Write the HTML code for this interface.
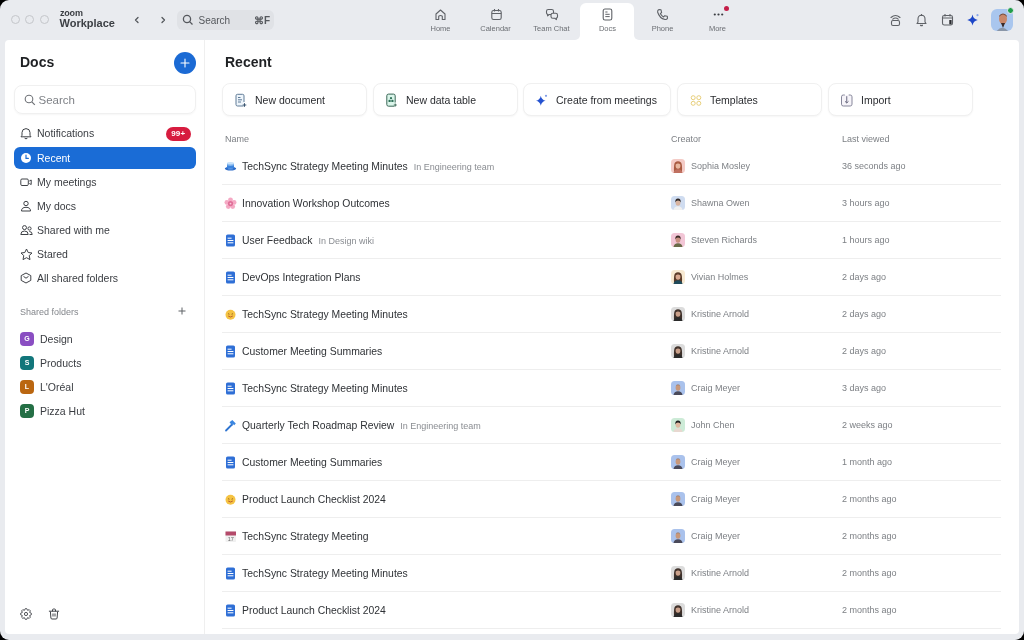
<!DOCTYPE html>
<html><head><meta charset="utf-8">
<style>
*{margin:0;padding:0;box-sizing:border-box}
html,body{width:1024px;height:640px;overflow:hidden;background:#000}
body{font-family:"Liberation Sans",sans-serif;position:relative}
#win{will-change:transform;position:absolute;left:0;top:0;width:1024px;height:640px;background:#e9ebef;border-radius:9px;overflow:hidden}
.abs{position:absolute}
.t{position:absolute;white-space:nowrap;line-height:1}
#panel{position:absolute;left:5px;top:40px;width:1014px;height:594px;background:#fff;border-radius:4px}
#divider{position:absolute;left:204px;top:40px;width:1px;height:594px;background:#efefef}
.light{position:absolute;width:9px;height:9px;border:1px solid #c4c6ca;border-radius:50%;top:15px}
.tab{position:absolute;top:3px;width:55px;height:37px}
.tab .lbl{position:absolute;left:0;right:0;top:21.5px;font-size:7.5px;color:#6b6e73;line-height:1;text-align:center}
.tab svg{position:absolute;left:21px;top:4.5px}
.nav{position:absolute;left:14px;width:182px;height:22px;border-radius:6px}
.nav .lbl{position:absolute;left:23px;top:6px;font-size:10.5px;color:#3a3d42;line-height:1;white-space:nowrap}
.nav svg{position:absolute;left:6px;top:5px}
.fold{position:absolute;left:20px;width:14px;height:14px;border-radius:4px;color:#fff;font-size:7px;font-weight:bold;text-align:center;line-height:14px}
.foldl{position:absolute;left:40px;font-size:10.5px;color:#3a3d42;line-height:1;white-space:nowrap}
.btn{position:absolute;top:83px;height:33px;border:1px solid #f0f0f0;border-radius:8px;background:#fff;box-shadow:0 1px 2px rgba(0,0,0,0.04)}
.btn .lbl{position:absolute;left:32px;top:10.5px;font-size:10.5px;color:#2b2d31;line-height:1;white-space:nowrap}
.btn svg{position:absolute;left:11px;top:9px}
.row{position:absolute;left:222px;width:779px;height:37px;border-bottom:1px solid #eeeeee}
.row .nm{position:absolute;left:20px;top:14px;font-size:10.4px;color:#2f3236;line-height:1;white-space:nowrap}
.row .loc{font-size:9px;color:#8a8d92;margin-left:6px}
.row .ic{position:absolute;left:2px;top:12px;width:13px;height:13px}
.row .ic svg{display:block}
.row .av{position:absolute;left:449px;top:11px;width:14px;height:14px}
.row .av svg{display:block}
.row .cr{position:absolute;left:469px;top:14px;font-size:9px;color:#7d8085;line-height:1;white-space:nowrap}
.row .lv{position:absolute;left:620px;top:14px;font-size:9px;color:#7d8085;line-height:1;white-space:nowrap}
.hdr{position:absolute;top:135px;font-size:9px;color:#7d8085;line-height:1}
</style></head><body>
<div id="win">
  <!-- title bar -->
  <div class="light" style="left:11px"></div>
  <div class="light" style="left:25px"></div>
  <div class="light" style="left:40px"></div>
  <div class="t" style="left:60px;top:9px;font-size:9px;font-weight:bold;color:#3a3d42;letter-spacing:-0.2px">zoom</div>
  <div class="t" style="left:59.5px;top:17.7px;font-size:11px;font-weight:bold;color:#3d4045">Workplace</div>
  <svg class="abs" style="left:133px;top:16px" width="8" height="8" viewBox="0 0 8 8"><path d="M5 1.5 L2.5 4 L5 6.5" fill="none" stroke="#55585d" stroke-width="1.3" stroke-linecap="round" stroke-linejoin="round"/></svg>
  <svg class="abs" style="left:159px;top:16px" width="8" height="8" viewBox="0 0 8 8"><path d="M3 1.5 L5.5 4 L3 6.5" fill="none" stroke="#55585d" stroke-width="1.3" stroke-linecap="round" stroke-linejoin="round"/></svg>
  <div class="abs" style="left:177px;top:10px;width:97px;height:20px;border-radius:6px;background:#e0e2e6"></div>
  <svg class="abs" style="left:182px;top:14px" width="12" height="12" viewBox="0 0 12 12"><circle cx="5" cy="5" r="3.6" fill="none" stroke="#55585d" stroke-width="1.3"/><path d="M7.6 7.6 L10.5 10.5" stroke="#55585d" stroke-width="1.3"/></svg>
  <div class="t" style="left:198.5px;top:15.5px;font-size:10px;color:#55585d">Search</div>
  <div class="t" style="left:254px;top:16px;font-size:10px;font-weight:bold;color:#55585d">&#8984;F</div>

  <!-- tabs -->
  <div class="tab" style="left:413px"><svg width="13" height="13" viewBox="0 0 13 13"><path d="M2 6 L6.5 2 L11 6 V11.5 H8.3 V8.2 Q6.5 6.8 4.7 8.2 V11.5 H2Z" fill="none" stroke="#5f6267" stroke-width="1.1" stroke-linejoin="round"/></svg><div class="lbl">Home</div></div>
  <div class="tab" style="left:468px"><svg width="13" height="13" viewBox="0 0 13 13" style="left:22px"><rect x="1.8" y="2.5" width="9.4" height="9" rx="1.8" fill="none" stroke="#5f6267" stroke-width="1.1"/><path d="M1.8 5.5H11.2M4.5 1V3.5M8.5 1V3.5" stroke="#5f6267" stroke-width="1.1"/></svg><div class="lbl">Calendar</div></div>
  <div class="tab" style="left:524px"><svg width="14" height="14" viewBox="0 0 14 14"><path d="M3.3 1.5 H6.7 Q8.5 1.5 8.5 3.3 V4.7 Q8.5 6.5 6.7 6.5 H4.2 L2.6 7.8 V6.3 Q1.5 6 1.5 4.7 V3.3 Q1.5 1.5 3.3 1.5Z" fill="none" stroke="#5f6267" stroke-width="1.1" stroke-linejoin="round"/><path d="M7.8 5.3 H10.7 Q12.5 5.3 12.5 7.1 V8.5 Q12.5 9.8 11.4 10.1 V11.6 L9.8 10.3 H7.8 Q6 10.3 6 8.5 V7.1 Q6 5.3 7.8 5.3Z" fill="#e9ebef" stroke="#5f6267" stroke-width="1.1" stroke-linejoin="round"/></svg><div class="lbl">Team Chat</div></div>
  <div class="abs" style="left:580px;top:3px;width:54px;height:38px;background:#fff;border-radius:6px 6px 0 0"></div>
  <div class="abs" style="left:575px;top:35px;width:5px;height:5px;background:#fff"></div>
  <div class="abs" style="left:575px;top:35px;width:5px;height:5px;background:#e9ebef;border-bottom-right-radius:5px"></div>
  <div class="abs" style="left:634px;top:35px;width:5px;height:5px;background:#fff"></div>
  <div class="abs" style="left:634px;top:35px;width:5px;height:5px;background:#e9ebef;border-bottom-left-radius:5px"></div>
  <div class="tab" style="left:580px"><svg width="13" height="13" viewBox="0 0 13 13"><rect x="2.2" y="1" width="8.6" height="11" rx="1.8" fill="none" stroke="#5f6267" stroke-width="1.1"/><path d="M4.3 4H6.5M4.3 6.3H8.7M4.3 8.6H8.7" stroke="#5f6267" stroke-width="1"/></svg><div class="lbl">Docs</div></div>
  <div class="tab" style="left:635px"><svg width="13" height="13" viewBox="0 0 13 13"><path d="M3 1.5 L5 1.8 L5.6 4.5 L4.3 5.6 Q5.6 8 7.6 9 L8.7 7.7 L11.3 8.3 L11.5 10.3 Q10.8 11.8 9 11.5 Q3.5 10.3 1.6 4 Q1.5 2 3 1.5Z" fill="none" stroke="#5f6267" stroke-width="1.1" stroke-linejoin="round"/></svg><div class="lbl">Phone</div></div>
  <div class="tab" style="left:690px"><svg width="13" height="13" viewBox="0 0 13 13" style="left:22px"><circle cx="2.8" cy="6.5" r="1.1" fill="#3a3d42"/><circle cx="6.5" cy="6.5" r="1.1" fill="#3a3d42"/><circle cx="10.2" cy="6.5" r="1.1" fill="#3a3d42"/></svg><div class="lbl">More</div></div>
  <div class="abs" style="left:724px;top:6px;width:5px;height:5px;border-radius:50%;background:#c41e48"></div>

  <!-- right icons -->
  <svg class="abs" style="left:889px;top:13px" width="13" height="14" viewBox="0 0 13 14"><path d="M2 4.5 Q6.5 0.5 11 4.5M3.8 6.2 Q6.5 3.8 9.2 6.2" fill="none" stroke="#5f6267" stroke-width="1.1" stroke-linecap="round"/><rect x="2.5" y="7.5" width="8" height="5" rx="1.5" fill="none" stroke="#5f6267" stroke-width="1.1"/></svg>
  <svg class="abs" style="left:915px;top:13px" width="13" height="14" viewBox="0 0 13 14"><path d="M2 10.5 H11 L10 9 V6 Q10 2.5 6.5 2.3 Q3 2.5 3 6 V9Z" fill="none" stroke="#5f6267" stroke-width="1.1" stroke-linejoin="round"/><path d="M5.2 12 Q6.5 13.3 7.8 12" fill="none" stroke="#5f6267" stroke-width="1.1"/><path d="M6.5 1 V2.3" stroke="#5f6267" stroke-width="1.1"/></svg>
  <svg class="abs" style="left:941px;top:13px" width="13" height="14" viewBox="0 0 13 14"><rect x="1.5" y="2.5" width="10" height="9.5" rx="1.8" fill="none" stroke="#5f6267" stroke-width="1.1"/><path d="M1.5 5H11.5M4 1V3.5M9 1V3.5" stroke="#5f6267" stroke-width="1.1"/><rect x="8.3" y="7" width="2.3" height="4.3" fill="#2a2c30"/></svg>
  <svg class="abs" style="left:966px;top:12px" width="15" height="15" viewBox="0 0 15 15"><path d="M6.5 2.5 Q7.3 7.2 11.8 8 Q7.3 8.8 6.5 13.5 Q5.7 8.8 1.2 8 Q5.7 7.2 6.5 2.5Z" fill="#1d47c8"/><circle cx="11.5" cy="3.2" r="1.1" fill="#8aa6e8"/></svg>
  <div class="abs" style="left:990.5px;top:8.5px;width:22px;height:22.5px;border-radius:6px;background:#a9c6ee;overflow:hidden">
    <svg width="23" height="23" viewBox="0 0 23 23"><ellipse cx="12" cy="10" rx="4" ry="5.2" fill="#c8876a"/><path d="M8 8 Q12 3 16 8 Q16 5 12 4.5 Q8 5 8 8Z" fill="#7a5040"/><path d="M5 23 Q11 14.5 18 23Z" fill="#8a96a8"/><path d="M10 14 L12 19 L14 14Z" fill="#3a2a28"/></svg>
  </div>
  <div class="abs" style="left:1007px;top:6.5px;width:7px;height:7px;border-radius:50%;background:#1f9d4a;border:1px solid #e9ebef"></div>

  <div id="panel"></div>
  <div id="divider"></div>

  <!-- sidebar -->
  <div class="t" style="left:20px;top:55px;font-size:14px;font-weight:bold;color:#1f2124">Docs</div>
  <div class="abs" style="left:174px;top:51.5px;width:22px;height:22px;border-radius:50%;background:#1b6ad4"></div>
  <svg class="abs" style="left:178px;top:55.5px" width="14" height="14" viewBox="0 0 14 14"><path d="M7 3V11M3 7H11" stroke="#fff" stroke-width="1.1" stroke-linecap="round"/></svg>

  <div class="abs" style="left:14px;top:85px;width:182px;height:29px;border:1px solid #f0f0f0;border-radius:8px;box-shadow:0 1px 2px rgba(0,0,0,0.04)"></div>
  <svg class="abs" style="left:23.5px;top:93.5px" width="12" height="12" viewBox="0 0 12 12"><circle cx="5" cy="5" r="3.8" fill="none" stroke="#6f7277" stroke-width="1.1"/><path d="M7.8 7.8 L10.8 10.8" stroke="#6f7277" stroke-width="1.2"/></svg>
  <div class="t" style="left:38.5px;top:95px;font-size:11.5px;color:#7f8287">Search</div>

  <div class="nav" style="top:122px"><svg width="12" height="13" viewBox="0 0 12 13"><path d="M1 9.8 H11 L10 8.3 V5.5 Q10 1.8 6 1.6 Q2 1.8 2 5.5 V8.3Z" fill="none" stroke="#3f4247" stroke-width="1" stroke-linejoin="round"/><path d="M4.6 11.2 Q6 12.5 7.4 11.2" fill="none" stroke="#3f4247" stroke-width="1"/></svg><div class="lbl">Notifications</div></div>
  <div class="abs" style="left:166px;top:126.5px;width:24.5px;height:14px;border-radius:7px;background:#d71c3f;color:#fff;font-size:8px;font-weight:bold;text-align:center;line-height:14px;letter-spacing:0.2px">99+</div>

  <div class="nav" style="top:147px;background:#1a6cd6"><svg width="12" height="12" viewBox="0 0 12 12"><circle cx="6" cy="6" r="5" fill="#fff"/><path d="M6 3.2V6.3H8.4" fill="none" stroke="#1a6cd6" stroke-width="1.2" stroke-linecap="round"/></svg><div class="lbl" style="color:#fff">Recent</div></div>
  <div class="nav" style="top:171px"><svg width="12" height="12" viewBox="0 0 12 12"><rect x="0.8" y="3" width="7.5" height="6.5" rx="1.2" fill="none" stroke="#3f4247" stroke-width="1"/><path d="M9.3 5 L11.2 4 V8.5 L9.3 7.5" fill="none" stroke="#3f4247" stroke-width="1"/></svg><div class="lbl">My meetings</div></div>
  <div class="nav" style="top:195px"><svg width="12" height="12" viewBox="0 0 12 12"><circle cx="6" cy="3.5" r="2.2" fill="none" stroke="#3f4247" stroke-width="1"/><path d="M1.5 11 Q1.5 7.3 6 7.3 Q10.5 7.3 10.5 11Z" fill="none" stroke="#3f4247" stroke-width="1" stroke-linejoin="round"/></svg><div class="lbl">My docs</div></div>
  <div class="nav" style="top:219px"><svg width="13" height="12" viewBox="0 0 13 12"><circle cx="4.5" cy="3.6" r="2" fill="none" stroke="#3f4247" stroke-width="1"/><path d="M0.8 10.5 Q0.8 7 4.5 7 Q8.2 7 8.2 10.5Z" fill="none" stroke="#3f4247" stroke-width="1"/><circle cx="9.5" cy="4.5" r="1.6" fill="none" stroke="#3f4247" stroke-width="1"/><path d="M9.3 7.5 Q12.2 7.5 12.2 10.5 H9.5" fill="none" stroke="#3f4247" stroke-width="1"/></svg><div class="lbl">Shared with me</div></div>
  <div class="nav" style="top:243px"><svg width="13" height="13" viewBox="0 0 13 13" style="left:5.5px;top:5px"><path d="M6.5 1 L8.2 4.5 L12 5 L9.2 7.6 L10 11.6 L6.5 9.7 L3 11.6 L3.8 7.6 L1 5 L4.8 4.5Z" fill="none" stroke="#3f4247" stroke-width="1" stroke-linejoin="round"/></svg><div class="lbl">Stared</div></div>
  <div class="nav" style="top:267px"><svg width="12" height="12" viewBox="0 0 12 12"><path d="M6 1 L10.8 3.6 V8.4 L6 11 L1.2 8.4 V3.6Z" fill="none" stroke="#3f4247" stroke-width="1" stroke-linejoin="round"/><path d="M3.8 4.6 L6 6.2 L8.2 4.6" fill="none" stroke="#3f4247" stroke-width="1" stroke-linecap="round" stroke-linejoin="round"/></svg><div class="lbl">All shared folders</div></div>

  <div class="t" style="left:20px;top:307.5px;font-size:9px;color:#83868b">Shared folders</div>
  <svg class="abs" style="left:177px;top:306px" width="10" height="10" viewBox="0 0 10 10"><path d="M5 1.5V8.5M1.5 5H8.5" stroke="#5f6267" stroke-width="1"/></svg>

  <div class="fold" style="top:331.7px;background:#8a4ec2">G</div><div class="foldl" style="top:334px">Design</div>
  <div class="fold" style="top:355.7px;background:#12767b">S</div><div class="foldl" style="top:358px">Products</div>
  <div class="fold" style="top:379.7px;background:#ba6610">L</div><div class="foldl" style="top:382px">L'Oréal</div>
  <div class="fold" style="top:403.7px;background:#246f45">P</div><div class="foldl" style="top:406px">Pizza Hut</div>

  <svg class="abs" style="left:19.5px;top:608px" width="12" height="12" viewBox="0 0 12 12"><path d="M4.47 2.30 L5.25 0.65 L6.75 0.65 L7.53 2.30 L9.25 1.69 L10.31 2.75 L9.70 4.47 L11.35 5.25 L11.35 6.75 L9.70 7.53 L10.31 9.25 L9.25 10.31 L7.53 9.70 L6.75 11.35 L5.25 11.35 L4.47 9.70 L2.75 10.31 L1.69 9.25 L2.30 7.53 L0.65 6.75 L0.65 5.25 L2.30 4.47 L1.69 2.75 L2.75 1.69Z" fill="none" stroke="#3f4247" stroke-width="0.9" stroke-linejoin="round"/><circle cx="6" cy="6" r="1.6" fill="none" stroke="#3f4247" stroke-width="0.9"/></svg>
  <svg class="abs" style="left:48px;top:608px" width="12" height="12" viewBox="0 0 12 12"><path d="M1.3 3.2 H10.7M4.5 3 V2 Q4.5 1 5.5 1 H6.5 Q7.5 1 7.5 2 V3" fill="none" stroke="#3f4247" stroke-width="1" stroke-linecap="round"/><path d="M2.4 3.6 L2.9 10 Q3 11 4 11 H8 Q9 11 9.1 10 L9.6 3.6" fill="none" stroke="#3f4247" stroke-width="1" stroke-linejoin="round"/><path d="M4.8 5.5V8.5M6 5.5V8.5M7.2 5.5V8.5" stroke="#3f4247" stroke-width="0.7"/></svg>

  <!-- main -->
  <div class="t" style="left:225px;top:55px;font-size:14px;font-weight:bold;color:#1f2124">Recent</div>

  <div class="btn" style="left:222px;width:145px"><svg width="14" height="15" viewBox="0 0 14 15"><path d="M9.5 13 H3.5 Q2 13 2 11.5 V2.8 Q2 1.3 3.5 1.3 H8.5 Q10 1.3 10 2.8 V9" fill="#eef5fb" stroke="#5e7a96" stroke-width="1"/><path d="M4 4.5H6.5M4 6.8H8M4 9H7" stroke="#5e7a96" stroke-width="1"/><path d="M10.5 10.2V13.8M8.7 12H12.3" stroke="#3a5570" stroke-width="1"/></svg><div class="lbl">New document</div></div>
  <div class="btn" style="left:373px;width:145px"><svg width="14" height="15" viewBox="0 0 14 15"><path d="M9.5 13.2 H3.5 Q1.8 13.2 1.8 11.5 V2.8 Q1.8 1.1 3.5 1.1 H8.5 Q10.2 1.1 10.2 2.8 V9.5" fill="#daf5ea" stroke="#3a6656" stroke-width="1"/><circle cx="6" cy="5.2" r="1.1" fill="#2f7058"/><circle cx="4.6" cy="7.9" r="1.2" fill="#2f7058"/><circle cx="7.4" cy="7.9" r="1.2" fill="#2f7058"/><path d="M10.3 10.5V13.5M8.8 12H11.8" stroke="#3a6656" stroke-width="0.9"/></svg><div class="lbl">New data table</div></div>
  <div class="btn" style="left:523px;width:148px"><svg width="14" height="15" viewBox="0 0 14 15"><path d="M5.8 2.8 Q6.6 7 10.6 7.8 Q6.6 8.6 5.8 12.8 Q5 8.6 1 7.8 Q5 7 5.8 2.8Z" fill="#2452d0"/><circle cx="11" cy="2.8" r="1.1" fill="#7f9be6"/></svg><div class="lbl">Create from meetings</div></div>
  <div class="btn" style="left:677px;width:145px"><svg width="14" height="15" viewBox="0 0 14 15"><circle cx="4.2" cy="4.7" r="2" fill="none" stroke="#e8cf7a" stroke-width="1"/><circle cx="9.8" cy="4.7" r="2" fill="none" stroke="#e8cf7a" stroke-width="1"/><circle cx="4.2" cy="10.3" r="2" fill="none" stroke="#e8cf7a" stroke-width="1"/><circle cx="9.8" cy="10.3" r="2" fill="none" stroke="#e8cf7a" stroke-width="1"/></svg><div class="lbl">Templates</div></div>
  <div class="btn" style="left:828px;width:145px"><svg width="14" height="15" viewBox="0 0 14 15"><rect x="1.5" y="2" width="10.5" height="11" rx="1.8" fill="#f6f4f9"/><path d="M4.8 2 H3.3 Q1.5 2 1.5 3.8 V11.2 Q1.5 13 3.3 13 H10.2 Q12 13 12 11.2 V3.8 Q12 2 10.2 2 H8.7" fill="none" stroke="#86869a" stroke-width="1"/><path d="M6.75 3.2V10M5 8.3 L6.75 10 L8.5 8.3" fill="none" stroke="#6a6a80" stroke-width="1"/></svg><div class="lbl">Import</div></div>

  <div class="hdr" style="left:225px">Name</div>
  <div class="hdr" style="left:671px">Creator</div>
  <div class="hdr" style="left:842px">Last viewed</div>

<div class="row" style="top:148px"><div class="ic"><svg width="13" height="13" viewBox="0 0 13 13"><ellipse cx="6.5" cy="8.6" rx="5.7" ry="2" fill="#2e6cc8"/><path d="M3 3.2 V7.8 Q6.5 9.6 10 7.8 V3.2Z" fill="#3c84de"/><path d="M3 3.2 V5.2 Q6.5 6.6 10 5.2 V3.2Z" fill="#7fb4ee"/><ellipse cx="6.5" cy="3.2" rx="3.5" ry="1.2" fill="#c8e2fa"/><ellipse cx="6.5" cy="8.9" rx="3" ry="0.8" fill="#6aa6ee" opacity="0.6"/></svg></div><div class="nm">TechSync Strategy Meeting Minutes<span class="loc">In Engineering team</span></div><div class="av"><svg width="14" height="14" viewBox="0 0 14 14"><rect width="14" height="14" rx="3.5" fill="#f4cbc6"/><path d="M3 12.5 Q2.6 5.5 4 3.6 Q7 1 10 3.6 Q11.4 5.5 11 12.5Z" fill="#a85a40"/><path d="M2.5 14 Q3 10.5 7 10.3 Q11 10.5 11.5 14Z" fill="#c07060"/><ellipse cx="7" cy="6.8" rx="2.4" ry="3" fill="#e8b8a0"/><path d="M4.5 5.5 Q5 3.3 7 3.3 Q9 3.3 9.5 5.5 Q8 4.5 7 4.6 Q6 4.5 4.5 5.5Z" fill="#a85a40"/></svg></div><div class="cr">Sophia Mosley</div><div class="lv">36 seconds ago</div></div>
<div class="row" style="top:185px"><div class="ic"><svg width="13" height="13" viewBox="0 0 13 13"><g fill="#f5a9c4"><circle cx="6.5" cy="2.8" r="2.4"/><circle cx="10.1" cy="5.4" r="2.4"/><circle cx="8.7" cy="9.6" r="2.4"/><circle cx="4.3" cy="9.6" r="2.4"/><circle cx="2.9" cy="5.4" r="2.4"/></g><circle cx="6.5" cy="6.6" r="2.6" fill="#e06f98"/><circle cx="6.5" cy="6.6" r="0.9" fill="#f8c8da"/></svg></div><div class="nm">Innovation Workshop Outcomes</div><div class="av"><svg width="14" height="14" viewBox="0 0 14 14"><rect width="14" height="14" rx="3.5" fill="#cfdcf0"/><path d="M2.5 14 Q3 10.5 7 10.3 Q11 10.5 11.5 14Z" fill="#f0f0f0"/><ellipse cx="7" cy="6.8" rx="2.4" ry="3" fill="#d8b4a0"/><path d="M4.3 6.5 Q4 2.6 7 2.5 Q10 2.6 9.7 6.5 Q9 4.3 7 4.4 Q5 4.3 4.3 6.5Z" fill="#2e2624"/></svg></div><div class="cr">Shawna Owen</div><div class="lv">3 hours ago</div></div>
<div class="row" style="top:222px"><div class="ic"><svg width="13" height="13" viewBox="0 0 13 13"><rect x="2" y="0.5" width="9" height="12" rx="1.6" fill="#2f6fd6"/><path d="M4 4.2h3.2M4 6.5h5M4 8.8h5" stroke="#fff" stroke-width="1" stroke-linecap="round"/></svg></div><div class="nm">User Feedback<span class="loc">In Design wiki</span></div><div class="av"><svg width="14" height="14" viewBox="0 0 14 14"><rect width="14" height="14" rx="3.5" fill="#f2c6d6"/><path d="M2.5 14 Q3 10.5 7 10.3 Q11 10.5 11.5 14Z" fill="#6a6a48"/><ellipse cx="7" cy="6.8" rx="2.4" ry="3" fill="#c89080"/><path d="M4.3 6.5 Q4 2.6 7 2.5 Q10 2.6 9.7 6.5 Q9 4.3 7 4.4 Q5 4.3 4.3 6.5Z" fill="#3a2a24"/></svg></div><div class="cr">Steven Richards</div><div class="lv">1 hours ago</div></div>
<div class="row" style="top:259px"><div class="ic"><svg width="13" height="13" viewBox="0 0 13 13"><rect x="2" y="0.5" width="9" height="12" rx="1.6" fill="#2f6fd6"/><path d="M4 4.2h3.2M4 6.5h5M4 8.8h5" stroke="#fff" stroke-width="1" stroke-linecap="round"/></svg></div><div class="nm">DevOps Integration Plans</div><div class="av"><svg width="14" height="14" viewBox="0 0 14 14"><rect width="14" height="14" rx="3.5" fill="#f7e9d2"/><path d="M3 12.5 Q2.6 5.5 4 3.6 Q7 1 10 3.6 Q11.4 5.5 11 12.5Z" fill="#5a3a28"/><path d="M2.5 14 Q3 10.5 7 10.3 Q11 10.5 11.5 14Z" fill="#1f4a5a"/><ellipse cx="7" cy="6.8" rx="2.4" ry="3" fill="#d8a890"/><path d="M4.5 5.5 Q5 3.3 7 3.3 Q9 3.3 9.5 5.5 Q8 4.5 7 4.6 Q6 4.5 4.5 5.5Z" fill="#5a3a28"/></svg></div><div class="cr">Vivian Holmes</div><div class="lv">2 days ago</div></div>
<div class="row" style="top:296px"><div class="ic"><svg width="13" height="13" viewBox="0 0 13 13"><circle cx="6.5" cy="6.8" r="5" fill="#f5c343"/><path d="M4 6.2q0.7-0.8 1.4 0M7.6 6.2q0.7-0.8 1.4 0" stroke="#7a4a10" stroke-width="0.8" fill="none"/><path d="M4.2 8q2.3 2 4.6 0" stroke="#b5542a" stroke-width="0.9" fill="none"/></svg></div><div class="nm">TechSync Strategy Meeting Minutes</div><div class="av"><svg width="14" height="14" viewBox="0 0 14 14"><rect width="14" height="14" rx="3.5" fill="#dcdcdc"/><path d="M3 12.5 Q2.6 5.5 4 3.6 Q7 1 10 3.6 Q11.4 5.5 11 12.5Z" fill="#3e302a"/><path d="M2.5 14 Q3 10.5 7 10.3 Q11 10.5 11.5 14Z" fill="#2a2a2a"/><ellipse cx="7" cy="6.8" rx="2.4" ry="3" fill="#caa08a"/><path d="M4.5 5.5 Q5 3.3 7 3.3 Q9 3.3 9.5 5.5 Q8 4.5 7 4.6 Q6 4.5 4.5 5.5Z" fill="#3e302a"/></svg></div><div class="cr">Kristine Arnold</div><div class="lv">2 days ago</div></div>
<div class="row" style="top:333px"><div class="ic"><svg width="13" height="13" viewBox="0 0 13 13"><rect x="2" y="0.5" width="9" height="12" rx="1.6" fill="#2f6fd6"/><path d="M4 4.2h3.2M4 6.5h5M4 8.8h5" stroke="#fff" stroke-width="1" stroke-linecap="round"/></svg></div><div class="nm">Customer Meeting Summaries</div><div class="av"><svg width="14" height="14" viewBox="0 0 14 14"><rect width="14" height="14" rx="3.5" fill="#dcdcdc"/><path d="M3 12.5 Q2.6 5.5 4 3.6 Q7 1 10 3.6 Q11.4 5.5 11 12.5Z" fill="#3e302a"/><path d="M2.5 14 Q3 10.5 7 10.3 Q11 10.5 11.5 14Z" fill="#2a2a2a"/><ellipse cx="7" cy="6.8" rx="2.4" ry="3" fill="#caa08a"/><path d="M4.5 5.5 Q5 3.3 7 3.3 Q9 3.3 9.5 5.5 Q8 4.5 7 4.6 Q6 4.5 4.5 5.5Z" fill="#3e302a"/></svg></div><div class="cr">Kristine Arnold</div><div class="lv">2 days ago</div></div>
<div class="row" style="top:370px"><div class="ic"><svg width="13" height="13" viewBox="0 0 13 13"><rect x="2" y="0.5" width="9" height="12" rx="1.6" fill="#2f6fd6"/><path d="M4 4.2h3.2M4 6.5h5M4 8.8h5" stroke="#fff" stroke-width="1" stroke-linecap="round"/></svg></div><div class="nm">TechSync Strategy Meeting Minutes</div><div class="av"><svg width="14" height="14" viewBox="0 0 14 14"><rect width="14" height="14" rx="3.5" fill="#aac2ec"/><path d="M2.5 14 Q3 10.5 7 10.3 Q11 10.5 11.5 14Z" fill="#4a4a5a"/><ellipse cx="7" cy="6.8" rx="2.4" ry="3" fill="#c8987a"/><path d="M4.7 5.2 Q5 3.2 7 3.2 Q9 3.2 9.3 5.2 Q8 4.2 7 4.3 Q6 4.2 4.7 5.2Z" fill="#8a6a58" opacity="0.6"/></svg></div><div class="cr">Craig Meyer</div><div class="lv">3 days ago</div></div>
<div class="row" style="top:407px"><div class="ic"><svg width="13" height="13" viewBox="0 0 13 13"><path d="M2 11.5 L8 5.5" stroke="#2f74d0" stroke-width="1.8" stroke-linecap="round"/><path d="M5.5 3.2 L8.3 1 L11.8 4.6 L10.2 6.2 L8.6 4.8 L7.5 5.8Z" fill="#3b86e0"/></svg></div><div class="nm">Quarterly Tech Roadmap Review<span class="loc">In Engineering team</span></div><div class="av"><svg width="14" height="14" viewBox="0 0 14 14"><rect width="14" height="14" rx="3.5" fill="#cdebd7"/><path d="M2.5 14 Q3 10.5 7 10.3 Q11 10.5 11.5 14Z" fill="#e8d8d0"/><ellipse cx="7" cy="6.8" rx="2.4" ry="3" fill="#e0b8a0"/><path d="M4.3 6.5 Q4 2.6 7 2.5 Q10 2.6 9.7 6.5 Q9 4.3 7 4.4 Q5 4.3 4.3 6.5Z" fill="#1e1e1e"/></svg></div><div class="cr">John Chen</div><div class="lv">2 weeks ago</div></div>
<div class="row" style="top:444px"><div class="ic"><svg width="13" height="13" viewBox="0 0 13 13"><rect x="2" y="0.5" width="9" height="12" rx="1.6" fill="#2f6fd6"/><path d="M4 4.2h3.2M4 6.5h5M4 8.8h5" stroke="#fff" stroke-width="1" stroke-linecap="round"/></svg></div><div class="nm">Customer Meeting Summaries</div><div class="av"><svg width="14" height="14" viewBox="0 0 14 14"><rect width="14" height="14" rx="3.5" fill="#aac2ec"/><path d="M2.5 14 Q3 10.5 7 10.3 Q11 10.5 11.5 14Z" fill="#4a4a5a"/><ellipse cx="7" cy="6.8" rx="2.4" ry="3" fill="#c8987a"/><path d="M4.7 5.2 Q5 3.2 7 3.2 Q9 3.2 9.3 5.2 Q8 4.2 7 4.3 Q6 4.2 4.7 5.2Z" fill="#8a6a58" opacity="0.6"/></svg></div><div class="cr">Craig Meyer</div><div class="lv">1 month ago</div></div>
<div class="row" style="top:481px"><div class="ic"><svg width="13" height="13" viewBox="0 0 13 13"><circle cx="6.5" cy="6.8" r="5" fill="#f5c343"/><path d="M4 6.2q0.7-0.8 1.4 0M7.6 6.2q0.7-0.8 1.4 0" stroke="#7a4a10" stroke-width="0.8" fill="none"/><path d="M4.2 8q2.3 2 4.6 0" stroke="#b5542a" stroke-width="0.9" fill="none"/></svg></div><div class="nm">Product Launch Checklist 2024</div><div class="av"><svg width="14" height="14" viewBox="0 0 14 14"><rect width="14" height="14" rx="3.5" fill="#aac2ec"/><path d="M2.5 14 Q3 10.5 7 10.3 Q11 10.5 11.5 14Z" fill="#4a4a5a"/><ellipse cx="7" cy="6.8" rx="2.4" ry="3" fill="#c8987a"/><path d="M4.7 5.2 Q5 3.2 7 3.2 Q9 3.2 9.3 5.2 Q8 4.2 7 4.3 Q6 4.2 4.7 5.2Z" fill="#8a6a58" opacity="0.6"/></svg></div><div class="cr">Craig Meyer</div><div class="lv">2 months ago</div></div>
<div class="row" style="top:518px"><div class="ic"><svg width="13" height="13" viewBox="0 0 13 13"><rect x="1.5" y="1.5" width="10.5" height="10.5" rx="0.8" fill="#f0f0f0"/><rect x="1.5" y="1.5" width="10.5" height="4" fill="#b44a6a"/><text x="6.75" y="11" font-size="5.5" text-anchor="middle" fill="#666" font-family="Liberation Sans">17</text></svg></div><div class="nm">TechSync Strategy Meeting</div><div class="av"><svg width="14" height="14" viewBox="0 0 14 14"><rect width="14" height="14" rx="3.5" fill="#aac2ec"/><path d="M2.5 14 Q3 10.5 7 10.3 Q11 10.5 11.5 14Z" fill="#4a4a5a"/><ellipse cx="7" cy="6.8" rx="2.4" ry="3" fill="#c8987a"/><path d="M4.7 5.2 Q5 3.2 7 3.2 Q9 3.2 9.3 5.2 Q8 4.2 7 4.3 Q6 4.2 4.7 5.2Z" fill="#8a6a58" opacity="0.6"/></svg></div><div class="cr">Craig Meyer</div><div class="lv">2 months ago</div></div>
<div class="row" style="top:555px"><div class="ic"><svg width="13" height="13" viewBox="0 0 13 13"><rect x="2" y="0.5" width="9" height="12" rx="1.6" fill="#2f6fd6"/><path d="M4 4.2h3.2M4 6.5h5M4 8.8h5" stroke="#fff" stroke-width="1" stroke-linecap="round"/></svg></div><div class="nm">TechSync Strategy Meeting Minutes</div><div class="av"><svg width="14" height="14" viewBox="0 0 14 14"><rect width="14" height="14" rx="3.5" fill="#dcdcdc"/><path d="M3 12.5 Q2.6 5.5 4 3.6 Q7 1 10 3.6 Q11.4 5.5 11 12.5Z" fill="#3e302a"/><path d="M2.5 14 Q3 10.5 7 10.3 Q11 10.5 11.5 14Z" fill="#2a2a2a"/><ellipse cx="7" cy="6.8" rx="2.4" ry="3" fill="#caa08a"/><path d="M4.5 5.5 Q5 3.3 7 3.3 Q9 3.3 9.5 5.5 Q8 4.5 7 4.6 Q6 4.5 4.5 5.5Z" fill="#3e302a"/></svg></div><div class="cr">Kristine Arnold</div><div class="lv">2 months ago</div></div>
<div class="row" style="top:592px"><div class="ic"><svg width="13" height="13" viewBox="0 0 13 13"><rect x="2" y="0.5" width="9" height="12" rx="1.6" fill="#2f6fd6"/><path d="M4 4.2h3.2M4 6.5h5M4 8.8h5" stroke="#fff" stroke-width="1" stroke-linecap="round"/></svg></div><div class="nm">Product Launch Checklist 2024</div><div class="av"><svg width="14" height="14" viewBox="0 0 14 14"><rect width="14" height="14" rx="3.5" fill="#dcdcdc"/><path d="M3 12.5 Q2.6 5.5 4 3.6 Q7 1 10 3.6 Q11.4 5.5 11 12.5Z" fill="#3e302a"/><path d="M2.5 14 Q3 10.5 7 10.3 Q11 10.5 11.5 14Z" fill="#2a2a2a"/><ellipse cx="7" cy="6.8" rx="2.4" ry="3" fill="#caa08a"/><path d="M4.5 5.5 Q5 3.3 7 3.3 Q9 3.3 9.5 5.5 Q8 4.5 7 4.6 Q6 4.5 4.5 5.5Z" fill="#3e302a"/></svg></div><div class="cr">Kristine Arnold</div><div class="lv">2 months ago</div></div>

</div>
</body></html>
